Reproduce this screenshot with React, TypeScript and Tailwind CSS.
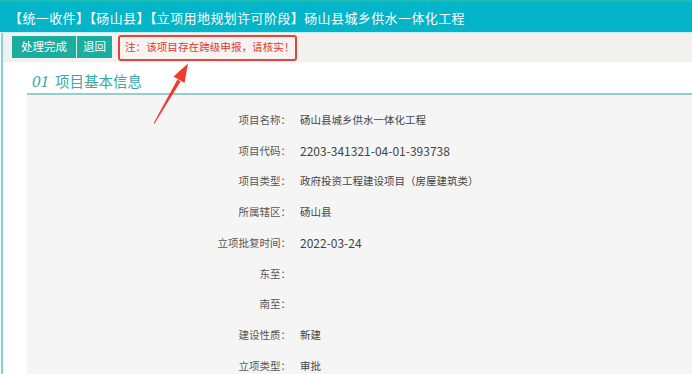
import React from "react";

const rows: { label: string; value: React.ReactNode }[] = [
  { label: "项目名称：", value: "砀山县城乡供水一体化工程" },
  { label: "项目代码：", value: <span className="text-[12px]">2203-341321-04-01-393738</span> },
  { label: "项目类型：", value: "政府投资工程建设项目（房屋建筑类）" },
  { label: "所属辖区：", value: "砀山县" },
  { label: "立项批复时间：", value: <span className="text-[12px]">2022-03-24</span> },
  { label: "东至：", value: "" },
  { label: "南至：", value: "" },
  { label: "建设性质：", value: "新建" },
  { label: "立项类型：", value: "审批" },
];

function Arrow() {
  return (
    <svg className="absolute left-0 top-0 pointer-events-none" width="692" height="374">
      <polygon points="153.6,123.2 154.4,123.7 180.6,81.5 177.4,79.6" fill="#f23a2c" />
      <polygon points="188,63.5 184.5,83 173.5,76.6" fill="#f23a2c" />
    </svg>
  );
}

export default function App() {
  return (
    <div
      className="relative w-[692px] h-[374px] overflow-hidden bg-white flex flex-col"
      style={{ fontFamily: '"Noto Sans CJK SC", "Noto Sans", sans-serif' }}
    >
      <header className="h-[32px] shrink-0 bg-[#04b5c9] border-t-2 border-[#1cbcae] flex items-center pl-[9px]">
        <h1 className="text-white text-[13px] tracking-[0.4px] leading-none whitespace-nowrap">
          【统一收件】【砀山县】【立项用地规划许可阶段】砀山县城乡供水一体化工程
        </h1>
      </header>
      <div className="h-px bg-[#c9eef0] shrink-0" />
      <div className="flex-1 ml-px border-l-2 border-[#7fd3df] flex flex-col">
        <div className="h-[29px] shrink-0 bg-[#f2f1ef] flex items-center pl-[9px]">
          <div className="flex h-[22px] -mt-[2px]">
            <button className="h-full w-[64px] bg-[#1bae9f] text-white text-[11.5px] leading-none">处理完成</button>
            <div className="w-px bg-[#d8f0ec]" />
            <button className="h-full w-[35px] bg-[#1bae9f] text-white text-[11.5px] leading-none">退回</button>
          </div>
          <div className="ml-[6px] h-[26px] w-[179px] border-2 border-[#e9423a] rounded-[3px] bg-[#f7f3f2] flex items-center pl-[5px]">
            <span className="text-[#e2392f] text-[10.6px] leading-none whitespace-nowrap">注：该项目存在跨级申报，请核实！</span>
          </div>
        </div>
        <section className="flex-1 ml-[24px] flex flex-col">
          <div className="h-[33px] shrink-0 pt-[8px] pl-[5px] flex items-center border-b-2 border-[#95cccc]">
            <span className="text-[#3ba5a7] text-[17px] italic leading-none" style={{ fontFamily: '"Liberation Serif", serif' }}>
              01
            </span>
            <span className="ml-[6px] text-[#3ba5a7] text-[14.5px] leading-none">项目基本信息</span>
          </div>
          <div className="flex-1 bg-[#f5f5f5] pt-[10px]">
            {rows.map((r) => (
              <div key={r.label} className="h-[30.7px] flex items-center text-[10.5px] leading-none">
                <div className="w-[264px] text-right text-[#555555]">{r.label}</div>
                <div className="ml-[9px] text-[#444444]">{r.value}</div>
              </div>
            ))}
          </div>
        </section>
      </div>
      <Arrow />
    </div>
  );
}
